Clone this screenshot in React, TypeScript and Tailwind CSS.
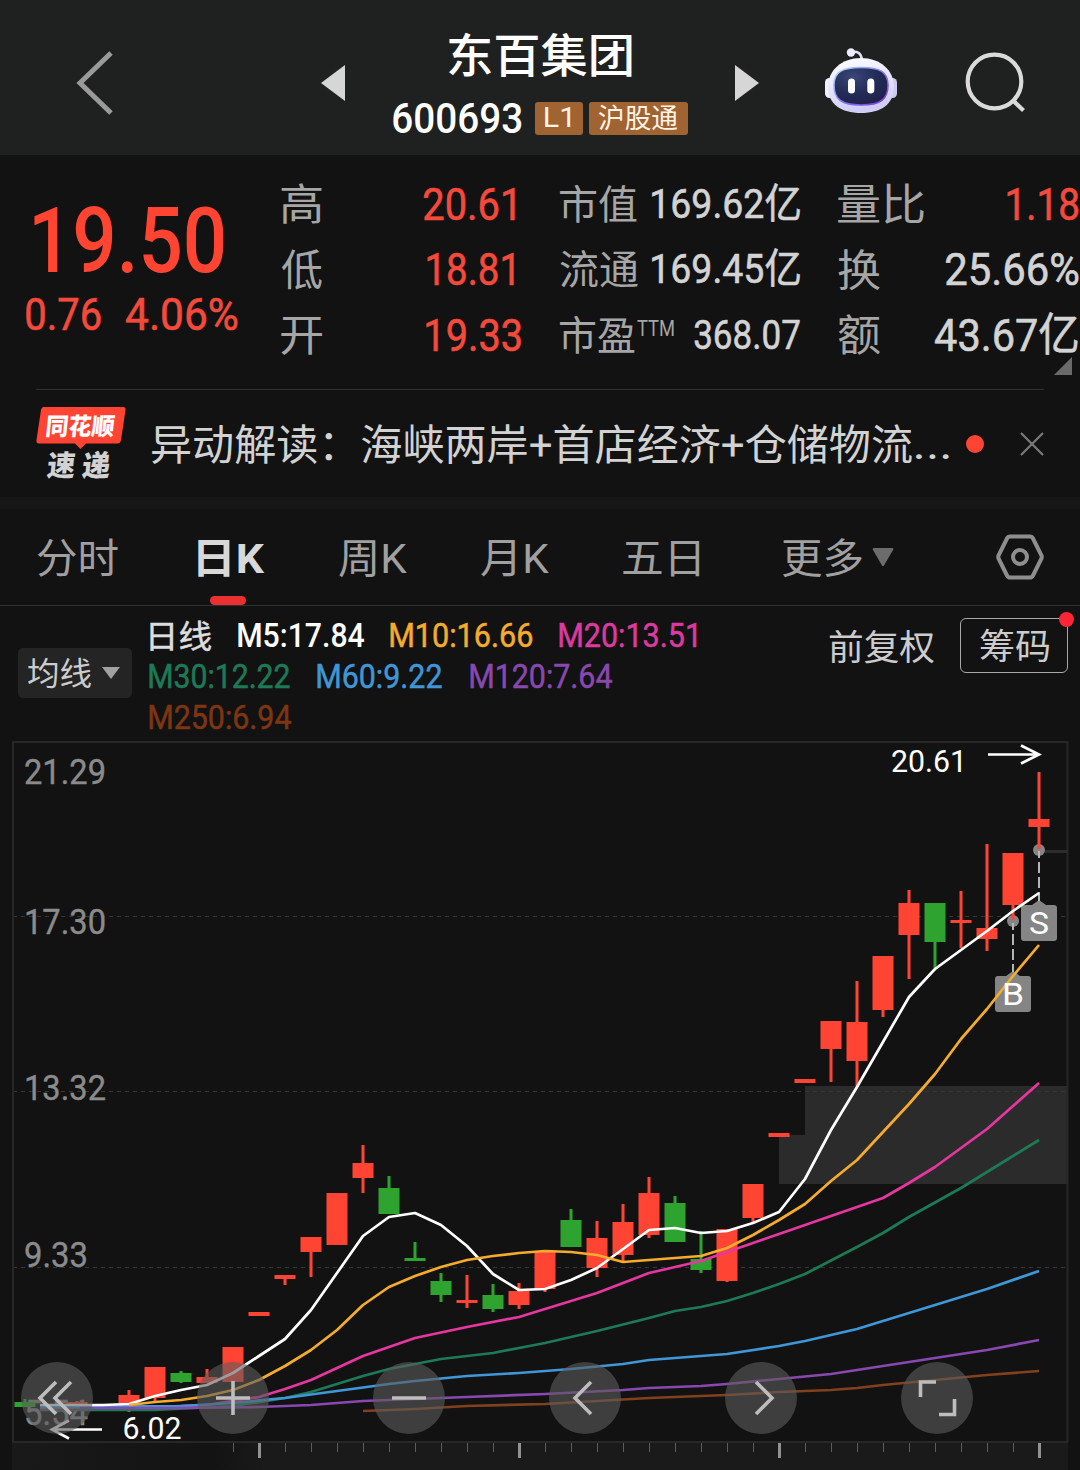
import { useLayoutEffect, useRef, useState, type ReactNode } from "react";

/* Text whose inked width is `w` pixels; lines led by a Han character sit slightly lower. */
function Fit({ w, className = "", children }: { w: number; className?: string; children: string }) {
  const ref = useRef<HTMLSpanElement>(null);
  const [t, setT] = useState("none");
  useLayoutEffect(() => {
    const cs = getComputedStyle(ref.current!);
    const ctx = document.createElement("canvas").getContext("2d")!;
    ctx.font = `${cs.fontStyle} ${cs.fontWeight} ${cs.fontSize} ${cs.fontFamily}`;
    const m = ctx.measureText(children);
    const s = w / (m.actualBoundingBoxLeft + m.actualBoundingBoxRight);
    const drop = /^[\u4e00-\u9fff]/.test(children) ? parseFloat(cs.fontSize) * 0.04 : 0;
    setT(`translate(${m.actualBoundingBoxLeft * s}px, ${drop}px) scaleX(${s})`);
  }, [w, children]);
  return (
    <span className={`block shrink-0 whitespace-nowrap leading-none ${className}`} style={{ width: w }}>
      <span ref={ref} className="inline-block origin-left" style={{ transform: t }}>
        {children}
      </span>
    </span>
  );
}

function Header() {
  return (
    <header className="flex h-[155px] items-start bg-[#1f2120]">
      <svg className="mt-[50px] ml-[74px] h-[66px] w-10 shrink-0" viewBox="0 0 40 66" fill="none" stroke="#9a9a9a" strokeWidth="5">
        <path d="M37 3L6 33L37 63" />
      </svg>
      <svg className="mt-[65px] ml-[207px] h-9 w-6 shrink-0" viewBox="0 0 24 36" fill="#d6d6d6">
        <path d="M24 0V36L0 18Z" />
      </svg>
      <div className="flex w-[390px] shrink-0 flex-col items-center text-white">
        <Fit w={184} className="mt-[31px] text-[46px] font-medium">东百集团</Fit>
        <div className="mt-[23px] flex h-9 items-center">
          <Fit w={129} className="mt-px ml-px text-[43px] font-medium">600693</Fit>
          <div className="ml-[13px] flex h-[33px] w-12 items-center justify-center rounded-[3px] bg-[#a06433]">
            <Fit w={25} className="mr-[3px] text-[28px] text-[#fff3e4]">L1</Fit>
          </div>
          <div className="ml-1.5 flex h-[33px] w-[99px] items-center justify-center rounded-[3px] bg-[#a06433]">
            <Fit w={79} className="text-[27px] text-[#fff3e4]">沪股通</Fit>
          </div>
        </div>
      </div>
      <svg className="mt-[65px] h-9 w-6 shrink-0" viewBox="0 0 24 36" fill="#d6d6d6">
        <path d="M0 0V36L24 18Z" />
      </svg>
      <svg className="mt-[45px] ml-[65px] h-[70px] w-[74px] shrink-0" viewBox="0 0 74 70">
        <defs>
          <linearGradient id="shell" x1="0" y1="0" x2="0.3" y2="1">
            <stop offset="0" stopColor="#ffffff" />
            <stop offset="0.6" stopColor="#e4e2fb" />
            <stop offset="1" stopColor="#cfcdf5" />
          </linearGradient>
          <linearGradient id="rim" x1="0" y1="0" x2="1" y2="1">
            <stop offset="0" stopColor="#a8e4f5" />
            <stop offset="0.5" stopColor="#8a7af0" />
            <stop offset="1" stopColor="#7a35d8" />
          </linearGradient>
          <radialGradient id="visor" cx="0.35" cy="0.25" r="0.9">
            <stop offset="0" stopColor="#3b4678" />
            <stop offset="0.5" stopColor="#232c56" />
            <stop offset="1" stopColor="#1c1f48" />
          </radialGradient>
        </defs>
        <path d="M27 7C34 6 37 8 38 15" fill="none" stroke="#e2e2f6" strokeWidth="2.6" />
        <circle cx="27" cy="7.5" r="4.2" fill="#ececfb" />
        <rect x="1" y="33" width="9" height="20" rx="4.5" fill="#f1f0ff" />
        <rect x="64" y="33" width="9" height="20" rx="4.5" fill="#cdcaf2" />
        <path d="M37 13C56 13 70 25 70 42C70 59 57 68 37 68S4 59 4 42C4 25 18 13 37 13Z" fill="url(#shell)" />
        <path d="M37 22.500C56 22.500 64 27 64 40C64 54 57 60 37 60S10 54 10 40C10 27 18 22.500 37 22.500Z" fill="url(#visor)" stroke="url(#rim)" strokeWidth="1.6" />
        <rect x="24" y="33.500" width="7" height="15" rx="3.500" fill="#fff" />
        <rect x="43.300" y="33.500" width="7" height="15" rx="3.500" fill="#fff" />
      </svg>
      <svg className="mt-[50px] ml-[65px] h-16 w-16 shrink-0" viewBox="0 0 64 64" fill="none" stroke="#dadada" strokeWidth="4.2">
        <circle cx="31.500" cy="31.500" r="26.800" />
        <path d="M49.500 50L60.500 60.500" />
      </svg>
    </header>
  );
}

function Row({ children }: { children: ReactNode }) {
  return <div className="flex h-[65.5px] items-center justify-between">{children}</div>;
}

function Quote() {
  return (
    <section className="relative flex h-[234px] items-start pt-4 text-[#a6a6a6]">
      <div className="w-[281px] shrink-0 text-[#f44a3b]">
        <Fit w={190} className="mt-[35px] ml-[34px] h-[70px] text-[91px] leading-[70px]! font-medium text-[#ff4532]">19.50</Fit>
        <div className="ml-[26px] flex pt-4 text-[45px] [-webkit-text-stroke:0.6px]">
          <Fit w={75}>0.76</Fit>
          <Fit w={111} className="ml-[25px]">4.06%</Fit>
        </div>
      </div>
      <div className="w-[240px] shrink-0 text-[43px]">
        <Row>
          <Fit w={41}>高</Fit>
          <Fit w={91} className="mt-px mr-[6px] text-[45px] [-webkit-text-stroke:0.6px] text-[#f44a3b]">20.61</Fit>
        </Row>
        <Row>
          <Fit w={41}>低</Fit>
          <Fit w={87} className="mt-px mr-[7px] text-[45px] [-webkit-text-stroke:0.6px] text-[#f44a3b]">18.81</Fit>
        </Row>
        <Row>
          <Fit w={41}>开</Fit>
          <Fit w={95} className="mt-px text-[45px] [-webkit-text-stroke:0.6px] text-[#f44a3b]">19.33</Fit>
        </Row>
      </div>
      <div className="ml-[39px] w-[240px] shrink-0 text-[40px]">
        <Row>
          <Fit w={77}>市值</Fit>
          <Fit w={148} className="mt-px text-[41px] [-webkit-text-stroke:0.6px] text-[#d3d3d3]">169.62亿</Fit>
        </Row>
        <Row>
          <Fit w={78}>流通</Fit>
          <Fit w={148} className="mt-px text-[41px] [-webkit-text-stroke:0.6px] text-[#d3d3d3]">169.45亿</Fit>
        </Row>
        <Row>
          <div className="flex">
            <Fit w={75}>市盈</Fit>
            <Fit w={37} className="mt-[3px] ml-0.5 text-[22px]">TTM</Fit>
          </div>
          <Fit w={106} className="mt-px text-[41px] [-webkit-text-stroke:0.6px] text-[#d3d3d3]">368.07</Fit>
        </Row>
      </div>
      <div className="ml-[38px] w-[240px] shrink-0 text-[43px]">
        <Row>
          <Fit w={86}>量比</Fit>
          <Fit w={71} className="mt-px text-[45px] [-webkit-text-stroke:0.6px] text-[#f44a3b]">1.18</Fit>
        </Row>
        <Row>
          <Fit w={42}>换</Fit>
          <Fit w={132} className="mt-px text-[45px] [-webkit-text-stroke:0.6px] text-[#d3d3d3]">25.66%</Fit>
        </Row>
        <Row>
          <Fit w={42}>额</Fit>
          <Fit w={143} className="mt-px text-[45px] [-webkit-text-stroke:0.6px] text-[#d3d3d3]">43.67亿</Fit>
        </Row>
      </div>
      <svg className="absolute right-2 bottom-[14px] h-[18px] w-[18px]" viewBox="0 0 18 18" fill="#6a6a6a">
        <path d="M18 0V18H0Z" />
      </svg>
    </section>
  );
}

function News() {
  return (
    <section className="mx-9 flex h-[108px] items-center border-t border-[#303030] text-[#d2d2d2]">
      <div className="relative h-[76px] w-[90px] shrink-0">
        <svg className="absolute inset-0" width="90" height="76" viewBox="0 0 90 76" fill="#ff4434">
          <path d="M8 1H87Q90 1 89.500 4L85 34Q84.500 37.500 81 37.500H50L44.500 43L39 37.500H3Q0 37.500 .5 34L5 4Q5.500 1 8 1Z" />
        </svg>
        <div className="relative ml-[11px] -skew-x-6 pt-[8px]">
          <Fit w={68} className="text-[24px] font-black text-white">同花顺</Fit>
        </div>
        <div className="relative ml-[12px] flex -skew-x-6 gap-[7px] pt-[13px] text-[29px] font-black">
          <Fit w={28}>速</Fit>
          <Fit w={28}>递</Fit>
        </div>
      </div>
      <div className="ml-[26px] flex w-[801px] shrink-0 items-center text-[42px]">
        <Fit w={760}>异动解读：海峡两岸+首店经济+仓储物流</Fit>
        <Fit w={34} className="mt-0.5 ml-[3px]">...</Fit>
      </div>
      <div className="ml-[13px] h-[18px] w-[18px] shrink-0 rounded-full bg-[#ff4434]" />
      <svg className="ml-9 h-6 w-6 shrink-0" viewBox="0 0 24 24" stroke="#7a7a7a" strokeWidth="2.2">
        <path d="M1 1L23 23M23 1L1 23" />
      </svg>
    </section>
  );
}

function Tabs() {
  return (
    <nav className="flex h-[97px] items-center border-b border-[#303030] pl-[37px] text-[41px] text-[#a0a0a0]">
      <Fit w={81}>分时</Fit>
      <div className="relative ml-[79px] flex h-full items-center font-bold text-[#d8d8d8]">
        <Fit w={67} className="mr-[-1px] ml-px">日K</Fit>
        <div className="absolute bottom-0 left-[13px] h-[9px] w-9 rounded-full bg-[#ea3030]" />
      </div>
      <Fit w={68} className="ml-[75px]">周K</Fit>
      <Fit w={68} className="ml-[74px]">月K</Fit>
      <Fit w={77} className="ml-[74px]">五日</Fit>
      <Fit w={80} className="ml-[82px]">更多</Fit>
      <svg className="ml-2.5 h-[19px] w-[22px] shrink-0" viewBox="0 0 22 19" fill="#6c6c6c">
        <path d="M2 0H20Q22 0 21 2L12 17.500Q11 19 10 17.500L1 2Q0 0 2 0Z" />
      </svg>
      <svg className="ml-[102px] h-[46px] w-12 shrink-0" viewBox="0 0 48 46" fill="none" stroke="#8e8e8e">
        <path d="M14 2.500H34Q36 2.500 37 4.500L45.500 21.500Q46 23 45.500 24.500L37 41.500Q36 43.500 34 43.500H14Q12 43.500 11 41.500L2.500 24.500Q2 23 2.500 21.500L11 4.500Q12 2.500 14 2.500Z" strokeWidth="4" />
        <circle cx="24" cy="23" r="7" strokeWidth="4" />
      </svg>
    </nav>
  );
}

function Averages() {
  return (
    <section className="flex h-[135px] items-start">
      <div className="mt-[42px] ml-[18px] flex h-[50px] w-[114px] shrink-0 items-center rounded-[5px] bg-[#242424] pl-2.5">
        <Fit w={63} className="text-[32px] text-[#cccccc]">均线</Fit>
        <svg className="ml-[11px] h-3 w-[18px]" viewBox="0 0 18 12" fill="#a0a0a0">
          <path d="M0 0H18L9 12Z" />
        </svg>
      </div>
      <div className="mt-[9px] ml-[17px] w-[559px] shrink-0 text-[33px] [-webkit-text-stroke:0.5px]">
        <div className="flex h-[41px] items-center">
          <Fit w={61} className="ml-px text-[32px] font-normal text-[#dddddd]">日线</Fit>
          <Fit w={126} className="ml-[27px] font-medium text-white [-webkit-text-stroke:0]">M5:17.84</Fit>
          <Fit w={142} className="ml-[26px] text-[#f5ac2c]">M10:16.66</Fit>
          <Fit w={137} className="ml-[27px] text-[#dd3aa0]">M20:13.51</Fit>
        </div>
        <div className="flex h-[41px] items-center">
          <Fit w={141} className="text-[#1d7a57]">M30:12.22</Fit>
          <Fit w={125} className="ml-[27px] text-[#3f97d8]">M60:9.22</Fit>
          <Fit w={142} className="ml-7 text-[#8948b0]">M120:7.64</Fit>
        </div>
        <div className="flex h-[41px] items-center">
          <Fit w={142} className="text-[#7d3512]">M250:6.94</Fit>
        </div>
      </div>
      <Fit w={105} className="mt-6 ml-[121px] text-[35px] text-[#cccccc]">前复权</Fit>
      <div className="relative mt-3 ml-[26px] flex h-[55px] w-[108px] items-center justify-center rounded-md border border-[#a8a8a8]">
        <Fit w={69} className="mt-0.5 text-[35px] text-[#cccccc]">筹码</Fit>
        <div className="absolute -top-[7px] -right-[7px] h-[15px] w-[15px] rounded-full bg-[#ff2535]" />
      </div>
    </section>
  );
}

const UP = "#ff4433";
const DOWN = "#2fa32f";

/* x, colour, high, low, body top, body bottom */
const candles: [number, string, number, number, number, number][] = [
  [25, DOWN, 1399, 1407, 1402, 1407],
  [77, UP, 1401, 1405, 1402, 1404],
  [129, UP, 1390, 1412, 1395, 1403],
  [155, UP, 1367, 1401, 1367, 1398],
  [181, DOWN, 1371, 1383, 1373, 1382],
  [207, UP, 1369, 1383, 1377, 1383],
  [233, UP, 1347, 1382, 1347, 1382],
  [259, UP, 1312, 1316, 1312, 1316],
  [285, UP, 1275, 1285, 1275, 1279],
  [311, UP, 1237, 1277, 1237, 1252],
  [337, UP, 1193, 1245, 1193, 1245],
  [363, UP, 1145, 1193, 1163, 1178],
  [389, DOWN, 1176, 1214, 1188, 1214],
  [415, DOWN, 1242, 1261, 1258, 1261],
  [441, DOWN, 1273, 1302, 1281, 1295],
  [467, UP, 1275, 1308, 1300, 1303],
  [493, DOWN, 1284, 1312, 1295, 1309],
  [519, UP, 1283, 1309, 1291, 1305],
  [545, UP, 1252, 1292, 1252, 1289],
  [571, DOWN, 1209, 1247, 1220, 1247],
  [597, UP, 1221, 1277, 1238, 1268],
  [623, UP, 1204, 1261, 1222, 1255],
  [649, UP, 1177, 1238, 1193, 1235],
  [675, DOWN, 1196, 1242, 1203, 1242],
  [701, DOWN, 1231, 1273, 1259, 1270],
  [727, UP, 1229, 1282, 1229, 1281],
  [753, UP, 1184, 1223, 1184, 1218],
  [779, UP, 1133, 1137, 1133, 1137],
  [805, UP, 1079, 1083, 1079, 1083],
  [831, UP, 1021, 1082, 1021, 1049],
  [857, UP, 981, 1086, 1022, 1061],
  [883, UP, 956, 1017, 956, 1010],
  [909, UP, 890, 979, 903, 935],
  [935, DOWN, 903, 968, 903, 942],
  [961, UP, 891, 948, 920, 923],
  [987, UP, 844, 951, 928, 939],
  [1013, UP, 853, 920, 853, 905],
  [1039, UP, 772, 849, 819, 827],
];

const averages: [string, string][] = [
  ["#82411d", "363,1411 415,1409 467,1406 545,1404 649,1398 727,1395 779,1392 831,1390 857,1388 883,1385 935,1380 987,1375 1039,1371"],
  ["#1d7a57", "40,1410 155,1410 233,1406 285,1398 311,1392 337,1384 363,1376 389,1369 415,1364 441,1359 493,1353 545,1343 597,1331 649,1318 675,1311 701,1307 727,1301 753,1293 779,1284 805,1274 857,1247 883,1233 909,1217 961,1188 1013,1156 1039,1140"],
  ["#e636a0", "40,1408 155,1407 207,1405 259,1397 285,1389 311,1380 337,1368 363,1356 389,1347 415,1338 467,1327 519,1317 545,1309 597,1293 649,1273 701,1261 753,1243 779,1234 831,1216 883,1198 909,1183 935,1167 961,1148 987,1129 1013,1106 1039,1083"],
  ["#3f97d8", "40,1407 181,1406 233,1403 285,1398 337,1391 389,1384 415,1381 467,1376 519,1373 571,1369 623,1364 649,1360 675,1358 727,1354 779,1346 805,1341 857,1329 883,1321 935,1305 987,1289 1039,1271"],
  ["#8948b0", "80,1408 180,1408 259,1407 311,1405 363,1401 389,1400 467,1397 545,1394 623,1390 649,1388 701,1386 727,1384 779,1379 831,1374 883,1366 935,1358 987,1350 1039,1340"],
  ["#ffffff", "40,1405 103,1405 129,1404 155,1396 181,1390 207,1385 233,1373 259,1356 285,1339 311,1310 337,1273 363,1236 389,1217 415,1213 441,1225 467,1246 493,1274 519,1290 545,1289 571,1280 597,1268 623,1249 649,1230 675,1228 701,1233 727,1231 753,1223 779,1212 805,1179 831,1130 857,1087 883,1042 909,997 935,969 961,950 987,931 1013,911 1039,893"],
  ["#f5ac2c", "129,1405 155,1402 181,1400 207,1396 233,1390 259,1380 285,1366 311,1350 337,1330 363,1305 389,1287 415,1276 441,1267 467,1260 493,1256 519,1253 545,1251 571,1252 597,1255 623,1262 649,1260 675,1258 701,1256 727,1248 753,1235 779,1220 805,1204 831,1181 857,1160 883,1132 909,1104 935,1074 961,1039 987,1009 1013,976 1039,945"],
];

const scale: [string, number, number, number][] = [
  ["21.29", 24, 784, 82],
  ["17.30", 24, 934, 82],
  ["13.32", 24, 1100, 82],
  ["9.33", 24, 1267, 64],
  ["5.54", 24, 1425, 64],
];

const ticks = Array.from({ length: 32 }, (_, i) => 233 + i * 26);

const controls: ReactNode[] = [
  <path key="first" d="M35 20L19 36L35 52M50 20L34 36L50 52" />,
  <path key="in" d="M36 19V53M19 36H53" />,
  <path key="out" d="M19 36H53" />,
  <path key="prev" d="M42 20L26 36L42 52" />,
  <path key="next" d="M31 20L47 36L31 52" />,
  <path key="full" d="M19.500 35V20H35M38 52.500H53.500V37" />,
];

function Chart() {
  return (
    <section className="relative h-[729px]">
      <svg className="block h-full w-full" viewBox="0 741 1080 729" fontFamily="Roboto, 'Noto Sans CJK SC', sans-serif">
        <defs>
          <linearGradient id="strip" x1="0" x2="1" y1="0" y2="0">
            <stop offset="0" stopColor="#191919" />
            <stop offset="0.19" stopColor="#131313" />
            <stop offset="0.24" stopColor="#1a1a1a" />
            <stop offset="1" stopColor="#1a1a1a" />
          </linearGradient>
        </defs>
        <rect x="12" y="1443" width="1056" height="27" fill="url(#strip)" />
        <path d="M805 1086H1068V1184H779V1135H805Z" fill="#2b2b2b" />
        <path d="M13 916.500H1068M13 1091.500H1068M13 1267.500H1068" stroke="#363636" strokeDasharray="4 4" />
        <rect x="13" y="742" width="1054.500" height="700" fill="none" stroke="#272727" strokeWidth="2" />
        <path d="M1045 851.500H1068" stroke="#2c2c2c" strokeWidth="3" />
        {ticks.map((x) => {
          const major = (x - 259) % 260 === 0;
          return <rect key={x} x={major ? x - 1 : x} y="1443" width={major ? 3 : 1} height={major ? 15 : 9} fill={major ? "#929292" : "#5c5c5c"} />;
        })}
        {scale.map(([label, x, y, w]) => (
          <text key={label} x={x} y={y} textLength={w} lengthAdjust="spacingAndGlyphs" fontSize="35" fill="#8b8b8b" stroke="#8b8b8b" strokeWidth="0.4">
            {label}
          </text>
        ))}
        <g fill="#858585">
          <circle cx="1039" cy="850" r="6" />
          <circle cx="1013" cy="921" r="6" />
          <path d="M1024 905H1032L1039 900L1046 905H1054Q1057 905 1057 908V938Q1057 941 1054 941H1024Q1021 941 1021 938V908Q1021 905 1024 905Z" />
          <path d="M998 976H1006L1013 971L1020 976H1028Q1031 976 1031 979V1009Q1031 1012 1028 1012H998Q995 1012 995 1009V979Q995 976 998 976Z" />
        </g>
        <path d="M1039 851V901M1013 923V972" stroke="#b5b5b5" strokeWidth="2" strokeDasharray="11 4" strokeDashoffset="4" />
        {candles.map(([x, color, high, low, top, bottom]) => (
          <g key={x} fill={color}>
            <rect x={x - 1.5} y={high} width="3" height={low - high} />
            <rect x={x - 10.5} y={top} width="21" height={bottom - top} />
          </g>
        ))}
        {averages.map(([color, points]) => (
          <polyline key={color} points={points} fill="none" stroke={color} strokeWidth="2.7" strokeLinejoin="round" />
        ))}
        <g fill="#fff">
          <text x="1029" y="934" textLength="20" lengthAdjust="spacingAndGlyphs" fontSize="32">S</text>
          <text x="1002" y="1005" textLength="22" lengthAdjust="spacingAndGlyphs" fontSize="32">B</text>
          <text x="891" y="772" textLength="76" lengthAdjust="spacingAndGlyphs" fontSize="31.500">20.61</text>
          <text x="122.500" y="1439" textLength="59" lengthAdjust="spacingAndGlyphs" fontSize="31.500">6.02</text>
        </g>
        <path d="M988 754.500H1038M1021 745.500L1039 754.500L1021 763.500M102 1429.500H52M69 1420.500L52 1429.500L69 1438.500" fill="none" stroke="#fff" strokeWidth="2.7" />
      </svg>
      <div className="absolute bottom-9 left-[21px] flex gap-[104px]">
        {controls.map((icon, i) => (
          <svg key={i} className="h-[72px] w-[72px] rounded-full bg-[#5b5b5b]/60" viewBox="0 0 72 72" fill="none" stroke="#bdbdbd" strokeWidth="3.6">
            {icon}
          </svg>
        ))}
      </div>
    </section>
  );
}

export default function App() {
  return (
    <main className="h-[1470px] w-[1080px] overflow-hidden bg-[#121212] font-[Roboto,'Noto_Sans_CJK_SC',sans-serif]">
      <Header />
      <Quote />
      <News />
      <div className="h-3 bg-[#171717]" />
      <Tabs />
      <Averages />
      <Chart />
    </main>
  );
}
